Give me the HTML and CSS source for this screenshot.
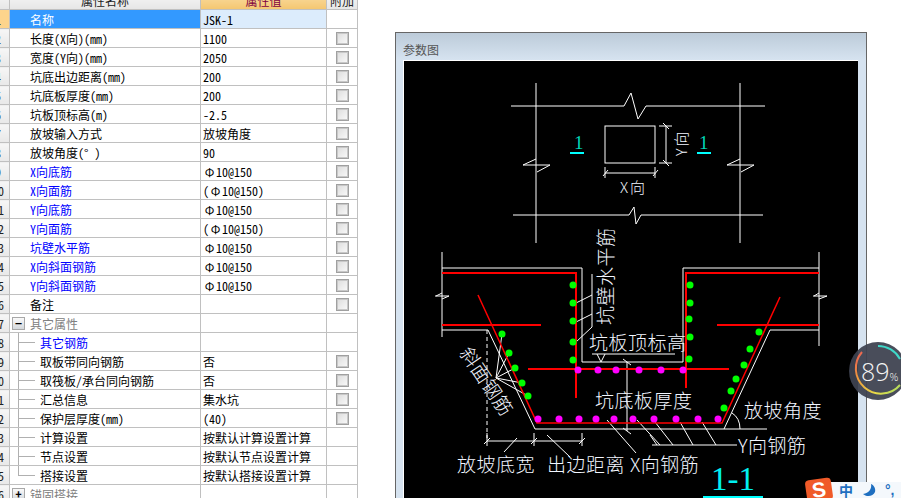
FILE: index.html
```html
<!DOCTYPE html>
<html lang="zh-CN">
  <head>
    <meta charset="UTF-8" />
    <title>参数图</title>
    <link rel="stylesheet" href="styles.css">
  </head>
  <body>
    <div class="screen">
      <!-- Property table -->
      <div class="props">
        <table class="props-table">
          <colgroup>
            <col class="col-num"><col class="col-name"><col class="col-value"><col class="col-check">
          </colgroup>
          <tr class="head"><th></th><th>属性名称</th><th class="head-value">属性值</th><th>附加</th></tr>
          <tr class="selected"><td class="num">1</td><td class="name">名称</td><td class="value">JSK-1</td><td></td></tr>
          <tr><td class="num">2</td><td class="name">长度(X向)(mm)</td><td class="value">1100</td><td><i class="check"></i></td></tr>
          <tr><td class="num">3</td><td class="name">宽度(Y向)(mm)</td><td class="value">2050</td><td><i class="check"></i></td></tr>
          <tr><td class="num">4</td><td class="name">坑底出边距离(mm)</td><td class="value">200</td><td><i class="check"></i></td></tr>
          <tr><td class="num">5</td><td class="name">坑底板厚度(mm)</td><td class="value">200</td><td><i class="check"></i></td></tr>
          <tr><td class="num">6</td><td class="name">坑板顶标高(m)</td><td class="value">-2.5</td><td><i class="check"></i></td></tr>
          <tr><td class="num">7</td><td class="name">放坡输入方式</td><td class="value">放坡角度</td><td><i class="check"></i></td></tr>
          <tr><td class="num">8</td><td class="name">放坡角度(° )</td><td class="value">90</td><td><i class="check"></i></td></tr>
          <tr><td class="num">9</td><td class="name blue">X向底筋</td><td class="value"><b class="bar">Φ</b>10@150</td><td><i class="check"></i></td></tr>
          <tr><td class="num">10</td><td class="name blue">X向面筋</td><td class="value">(<b class="bar">Φ</b>10@150)</td><td><i class="check"></i></td></tr>
          <tr><td class="num">11</td><td class="name blue">Y向底筋</td><td class="value"><b class="bar">Φ</b>10@150</td><td><i class="check"></i></td></tr>
          <tr><td class="num">12</td><td class="name blue">Y向面筋</td><td class="value">(<b class="bar">Φ</b>10@150)</td><td><i class="check"></i></td></tr>
          <tr><td class="num">13</td><td class="name blue">坑壁水平筋</td><td class="value"><b class="bar">Φ</b>10@150</td><td><i class="check"></i></td></tr>
          <tr><td class="num">14</td><td class="name blue">X向斜面钢筋</td><td class="value"><b class="bar">Φ</b>10@150</td><td><i class="check"></i></td></tr>
          <tr><td class="num">15</td><td class="name blue">Y向斜面钢筋</td><td class="value"><b class="bar">Φ</b>10@150</td><td><i class="check"></i></td></tr>
          <tr><td class="num">16</td><td class="name">备注</td><td class="value"></td><td><i class="check"></i></td></tr>
          <tr><td class="num">17</td><td><div class="group"><i class="toggle">−</i>其它属性</div></td><td></td><td></td></tr>
          <tr><td class="num">18</td><td class="name child blue">其它钢筋</td><td></td><td></td></tr>
          <tr><td class="num">19</td><td class="name child">取板带同向钢筋</td><td class="value">否</td><td><i class="check"></i></td></tr>
          <tr><td class="num">20</td><td class="name child">取筏板/承台同向钢筋</td><td class="value">否</td><td><i class="check"></i></td></tr>
          <tr><td class="num">21</td><td class="name child">汇总信息</td><td class="value">集水坑</td><td><i class="check"></i></td></tr>
          <tr><td class="num">22</td><td class="name child">保护层厚度(mm)</td><td class="value">(40)</td><td><i class="check"></i></td></tr>
          <tr><td class="num">23</td><td class="name child">计算设置</td><td class="value">按默认计算设置计算</td><td></td></tr>
          <tr><td class="num">24</td><td class="name child">节点设置</td><td class="value">按默认节点设置计算</td><td></td></tr>
          <tr><td class="num">25</td><td class="name child last">搭接设置</td><td class="value">按默认搭接设置计算</td><td></td></tr>
          <tr><td class="num">26</td><td><div class="group"><i class="toggle">+</i>锚固搭接</div></td><td></td><td></td></tr>
        </table>
      </div>

      <!-- Parameter drawing -->
      <div class="panel">
        <div class="panel-title">参数图</div>
        <div class="panel-body">
          <svg class="drawing" viewBox="404 61 454 437" width="454" height="437">
            <!-- plan view -->
            <g class="ln">
              <path d="M511 106H624L631 93L638 119L646 106H765" />
              <path d="M513 215H629L634 207L636 224L641 215H763" />
              <path d="M536 83V243M740 83V243" />
              <path d="M550 165H523L536 159M550 165L537 172" />
              <path d="M754 165H727L740 159M754 165L741 172" />
              <rect x="605" y="126" width="50" height="37" />
              <path d="M605 173H655M605 167V178M655 167V178M603 176L608 170M653 176L658 170" />
              <path d="M666 126V163M659 126H672M659 163H672M663 123L669 129M663 160L669 166" />
            </g>
            <text class="cad small" x="620" y="193">X向</text>
            <text class="cad small" transform="translate(687 156) rotate(-90)">Y向</text>
            <text class="sec" x="574" y="149">1</text>
            <text class="sec" x="699" y="149">1</text>
            <rect class="cyan" x="570" y="152" width="14" height="2" />
            <rect class="cyan" x="697" y="152" width="14" height="2" />

            <!-- section outline -->
            <g class="ln">
              <path d="M442 252V337M435 296H449M436 296L442 293M442 299L449 296" />
              <path d="M819 252V346M813 296H827M814 296L819 293M819 299L827 296" />
              <path d="M442 268H582V362H683V268H819" />
              <path d="M442 330H488L535 429H767M819 330H770L724 429" />
              <path d="M592 274V327L576 342M592 295L576 303M592 314L576 322" />
              <path d="M592 354H675M597 354L601 362L605 354" />
              <path d="M627 362V431M623 359L631 365M623 428L631 434" />
              <path d="M487 441H582M487 433V446M534 433V446M582 433V446M484 444L490 438M531 444L537 438M579 444L585 438" />
              <path d="M504 452L517 438M547 435L570 457M607 420L636 453M637 420L660 445" />
              <path d="M652 445H737M655 422L673 445M680 422L693 445M702 422L716 445M650 435L657 445" />
              <path d="M732 413Q740 418 740 429" />
              <path d="M496 378L502 334M496 378L509 353M496 378L515 368M496 378L522 383M496 378L528 396" />
            </g>
            <path class="ln dash" d="M487 330V438" />

            <!-- rebar -->
            <g class="red">
              <path d="M442 273H576V398M819 273H686V388" />
              <path d="M528 369H729" />
              <path d="M442 325H541M717 325H819" />
            </g>
            <path class="red thin" d="M478 295L537 423H722L780 297" />

            <g class="green">
              <circle cx="573" cy="285" r="3.5" /><circle cx="573" cy="303" r="3.5" /><circle cx="573" cy="321" r="3.5" />
              <circle cx="573" cy="342" r="3.5" /><circle cx="573" cy="360" r="3.5" />
              <circle cx="690" cy="285" r="3.5" /><circle cx="690" cy="303" r="3.5" /><circle cx="689" cy="319" r="3.5" />
              <circle cx="690" cy="337" r="3.5" /><circle cx="689" cy="359" r="3.5" />
              <circle cx="502" cy="334" r="3.5" /><circle cx="509" cy="353" r="3.5" /><circle cx="515" cy="368" r="3.5" />
              <circle cx="522" cy="383" r="3.5" /><circle cx="528" cy="396" r="3.5" />
              <circle cx="759" cy="332" r="3.5" /><circle cx="750" cy="349" r="3.5" /><circle cx="744" cy="365" r="3.5" />
              <circle cx="736" cy="379" r="3.5" /><circle cx="731" cy="391" r="3.5" /><circle cx="724" cy="408" r="3.5" />
            </g>
            <g class="magenta">
              <circle cx="578" cy="370" r="3.5" /><circle cx="598" cy="370" r="3.5" /><circle cx="616" cy="370" r="3.5" />
              <circle cx="639" cy="370" r="3.5" /><circle cx="661" cy="370" r="3.5" /><circle cx="683" cy="370" r="3.5" />
              <circle cx="538" cy="419" r="3.5" /><circle cx="559" cy="419" r="3.5" /><circle cx="579" cy="419" r="3.5" />
              <circle cx="596" cy="419" r="3.5" /><circle cx="614" cy="419" r="3.5" /><circle cx="633" cy="419" r="3.5" />
              <circle cx="654" cy="419" r="3.5" /><circle cx="676" cy="419" r="3.5" /><circle cx="698" cy="419" r="3.5" />
              <circle cx="718" cy="419" r="3.5" />
            </g>

            <!-- labels -->
            <text class="cad" transform="translate(613 325) rotate(-90)">坑壁水平筋</text>
            <text class="cad" transform="translate(459 353) rotate(56)">斜面钢筋</text>
            <text class="cad" x="589" y="350">坑板顶标高</text>
            <text class="cad" x="595" y="408">坑底板厚度</text>
            <text class="cad" x="744" y="418">放坡角度</text>
            <text class="cad" x="738" y="453">Y向钢筋</text>
            <text class="cad" x="457" y="472">放坡底宽</text>
            <text class="cad" x="547" y="472">出边距离</text>
            <text class="cad" x="630" y="472">X向钢筋</text>
            <text class="sec big" x="711" y="490">1-1</text>
            <rect class="cyan" x="703" y="496" width="60" height="2" />
          </svg>
        </div>
      </div>

      <!-- Desktop widgets lying over the window -->
      <div class="meter">
        <svg viewBox="0 0 60 60" width="60" height="60">
          <defs>
            <linearGradient id="ringGrad" gradientUnits="userSpaceOnUse" x1="5" y1="8" x2="50" y2="50">
              <stop offset="0" stop-color="#e8505a" />
              <stop offset="0.35" stop-color="#ef9a3c" />
              <stop offset="0.75" stop-color="#e6dc48" />
              <stop offset="1" stop-color="#a8dc60" />
            </linearGradient>
          </defs>
          <circle class="meter-disc" cx="29" cy="29" r="29" />
          <path class="meter-teal" d="M29 4A25 25 0 0 1 51 17" />
          <path class="meter-arc" d="M13 10A25 25 0 0 0 51 43" />
        </svg>
        <span class="meter-text">89<small>%</small></span>
      </div>

      <div class="ime">
        <span class="ime-logo">S</span>
        <span class="ime-lang">中</span>
        <svg viewBox="0 0 14 14" width="14" height="14"><path class="ime-icon" d="M9 1C10 6 7 10 1 11C4 14 11 14 13 9C14 6 12 2 9 1Z" /></svg>
        <span class="ime-dots">°,</span>
      </div>
    </div>
  </body>
</html>
```

FILE: styles.css
```css
* {
  margin: 0;
  padding: 0;
  box-sizing: border-box;
}

body {
  background: white;
}

.screen {
  position: relative;
  display: flex;
  width: 901px;
  height: 498px;
  overflow: hidden;
  font-family: "Noto Sans Mono CJK SC", "Noto Sans CJK SC", monospace;
  font-size: 12px;
  color: #000;
}

/* Property table */
.props {
  flex: 0 0 395px;
  width: 395px;
  height: 498px;
  overflow: hidden;
}

.props-table {
  border-collapse: collapse;
  table-layout: fixed;
  width: 371px;
  margin: -10px 0 0 -14px;
}

.col-num {
  width: 23px;
}

.col-name {
  width: 191px;
}

.col-value {
  width: 126px;
}

.col-check {
  width: 31px;
}

.props-table tr {
  height: 19px;
}

.props-table th,
.props-table td {
  border: 1px solid #c0c0c0;
  padding-top: 1px;
  font-weight: normal;
  line-height: 16px;
  white-space: nowrap;
  overflow: hidden;
  text-align: left;
}

.props-table th {
  background: linear-gradient(#f8f8f8, #e6e6e6);
  text-align: center;
  color: #222;
}

.props-table .head-value {
  background: linear-gradient(#fbe0a8, #f4c670);
  color: #800040;
}

.props-table .num {
  background: linear-gradient(#f6f6f6, #e8e8e8);
  text-align: center;
  color: #222;
}

.name {
  padding-left: 20px;
}

.value {
  padding-left: 2px;
}

.blue {
  color: #0000ff;
}

.bar {
  display: inline-block;
  width: 13px;
  font-weight: normal;
  text-align: center;
}

.props-table .selected .num {
  background: #fdd48c;
}

.selected .name {
  background: #3399ff;
  color: white;
}

.selected .value {
  background: #dcecfc;
}

.check {
  display: block;
  width: 13px;
  height: 13px;
  margin-left: 9px;
  border: 1px solid #a0a0a0;
  outline: 1px solid #c8c8c8;
  outline-offset: -2px;
  background: linear-gradient(135deg, #dcdcdc, #fafafa);
}

/* Tree rows */
.group {
  display: flex;
  align-items: center;
  gap: 5px;
  height: 16px;
  padding-left: 2px;
  color: #808080;
}

.toggle {
  display: block;
  width: 13px;
  height: 13px;
  border: 1px solid #a8a8a8;
  background: linear-gradient(#fafafa, #d4d8dc);
  color: #000;
  font-style: normal;
  font-weight: bold;
  line-height: 10px;
  text-align: center;
}

.child {
  position: relative;
  padding-left: 30px;
}

.child::before {
  content: "";
  position: absolute;
  left: 8px;
  top: 0;
  bottom: 0;
  width: 17px;
  background:
    linear-gradient(#b0b0b0, #b0b0b0) 0 0 / 1px 100% no-repeat,
    linear-gradient(#b0b0b0, #b0b0b0) 0 9px / 100% 1px no-repeat;
}

.last::before {
  background:
    linear-gradient(#b0b0b0, #b0b0b0) 0 0 / 1px 10px no-repeat,
    linear-gradient(#b0b0b0, #b0b0b0) 0 9px / 100% 1px no-repeat;
}

/* Parameter drawing panel */
.panel {
  flex: 0 0 472px;
  width: 472px;
  height: 480px;
  margin-top: 32px;
  border: 1px solid #666;
  border-bottom: 0;
  background: #d6e3f0;
  padding: 0 7px;
}

.panel-title {
  height: 27px;
  margin: 0 -7px;
  padding: 9px 0 0 7px;
  background: linear-gradient(#bccbd9, #d6e3f0);
  color: #555;
  line-height: 16px;
}

.panel-body {
  border-top: 1px solid white;
  border-left: 1px solid white;
  height: 438px;
  width: 455px;
}

.drawing {
  display: block;
  background: black;
}

.ln {
  fill: none;
  stroke: white;
  stroke-width: 1;
}

.dash {
  stroke-dasharray: 4 3;
}

.red {
  fill: none;
  stroke: #ff0000;
  stroke-width: 2;
}

.thin {
  stroke-width: 1.5;
}

.green {
  fill: #00ff00;
}

.magenta {
  fill: #ff00ff;
}

.cyan {
  fill: #00ffff;
}

.cad {
  fill: #f2f6ff;
  font-family: "Noto Sans CJK SC", sans-serif;
  font-size: 19px;
  font-weight: 300;
  letter-spacing: 0.5px;
}

.small {
  font-size: 15px;
  letter-spacing: 2px;
}

.sec {
  fill: #00d8b8;
  font-family: "Liberation Serif", serif;
  font-size: 19px;
}

.big {
  fill: #00f0f0;
  font-size: 33px;
}

/* CPU meter widget */
.meter {
  position: absolute;
  left: 849px;
  top: 342px;
  width: 60px;
  height: 60px;
}

.meter svg {
  display: block;
}

.meter-disc {
  fill: rgba(62, 66, 80, 0.94);
}

.meter-teal {
  fill: none;
  stroke: #3fd8c8;
  stroke-width: 2;
}

.meter-arc {
  fill: none;
  stroke: url(#ringGrad);
  stroke-width: 2;
}

.meter-text {
  position: absolute;
  left: 12px;
  top: 13px;
  color: #f4f4f4;
  font-family: "Open Sans", sans-serif;
  font-size: 25px;
  font-weight: 300;
  line-height: 32px;
  white-space: nowrap;
}

.meter-text small {
  font-size: 11px;
}

/* Input method bar */
.ime {
  position: absolute;
  left: 830px;
  top: 482px;
  display: flex;
  align-items: center;
  gap: 9px;
  width: 71px;
  height: 16px;
  padding-left: 9px;
  background: #f4f8fc;
}

.ime-logo {
  position: absolute;
  left: -24px;
  top: -3px;
  width: 26px;
  height: 22px;
  border-radius: 4px;
  background: #f05a28;
  color: white;
  font-family: "Liberation Sans", sans-serif;
  font-size: 21px;
  font-weight: bold;
  line-height: 22px;
  text-align: center;
  transform: rotate(-8deg);
}

.ime-lang {
  color: #1f6fc0;
  font-family: "Noto Sans CJK SC", sans-serif;
  font-size: 14px;
  font-weight: bold;
  line-height: 16px;
}

.ime-icon {
  fill: #1f6fc0;
}

.ime-dots {
  color: #1f6fc0;
  font-family: "Liberation Sans", sans-serif;
  font-size: 14px;
  font-weight: bold;
  line-height: 14px;
}
```
